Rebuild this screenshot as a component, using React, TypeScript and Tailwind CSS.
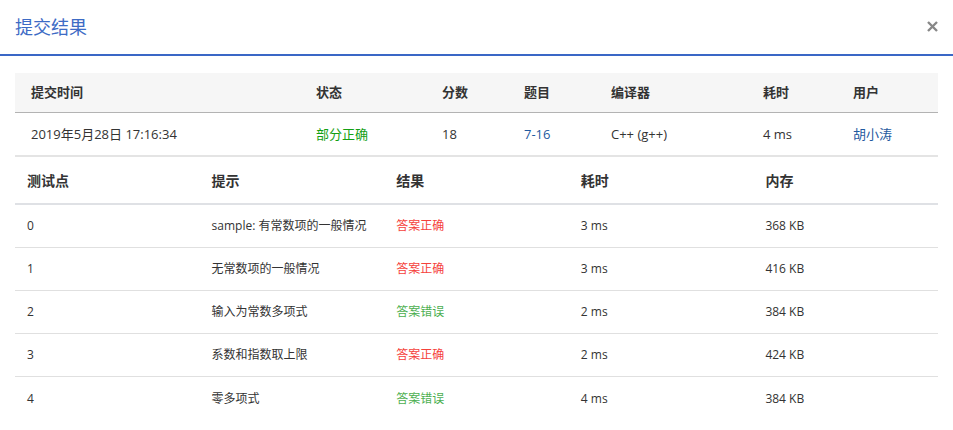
import React from "react";

type Case = { id: string; hint: string; ok: boolean; time: string; mem: string };

const cases: Case[] = [
  { id: "0", hint: "sample: 有常数项的一般情况", ok: true, time: "3 ms", mem: "368 KB" },
  { id: "1", hint: "无常数项的一般情况", ok: true, time: "3 ms", mem: "416 KB" },
  { id: "2", hint: "输入为常数多项式", ok: false, time: "2 ms", mem: "384 KB" },
  { id: "3", hint: "系数和指数取上限", ok: true, time: "2 ms", mem: "424 KB" },
  { id: "4", hint: "零多项式", ok: false, time: "4 ms", mem: "384 KB" },
];

export default function App() {
  return (
    <div
      className="w-[953px] h-[430px] bg-white text-[#333] overflow-hidden"
      style={{ fontFamily: '"Open Sans", "Noto Sans CJK SC", sans-serif' }}
    >
      <div className="h-[56px] flex items-center justify-between pl-[15px] pr-[15px] border-b-2 border-[#3a67c6]">
        <span className="text-[18px] text-[#3d6bc5] leading-none">提交结果</span>
        <svg width="11" height="11" viewBox="0 0 11 11" className="mb-[2px]">
          <path d="M1 1 L10 10 M10 1 L1 10" stroke="#888" strokeWidth="2.4" strokeLinecap="butt" />
        </svg>
      </div>

      <div className="mx-[15px] mt-[17px]">
        <div className="grid grid-cols-[285px_126px_82px_87px_152px_90px_103px] h-[40px] items-center bg-[#f6f6f6] border-b border-[#b3b3b3] text-[13px] font-bold">
          {["提交时间", "状态", "分数", "题目", "编译器", "耗时", "用户"].map((h) => (
            <div key={h} className="pl-[16px]">{h}</div>
          ))}
        </div>
        <div className="grid grid-cols-[285px_126px_82px_87px_152px_90px_103px] h-[44px] items-center border-b-2 border-[#e4e4e4] text-[13px] pt-[2px]">
          <div className="pl-[16px]">2019年5月28日 17:16:34</div>
          <div className="pl-[16px] text-[#14a014]">部分正确</div>
          <div className="pl-[16px]">18</div>
          <div className="pl-[16px] text-[#1f5aa0]">7-16</div>
          <div className="pl-[16px]">C++ (g++)</div>
          <div className="pl-[16px]">4 ms</div>
          <div className="pl-[16px] text-[#1f5aa0]">胡小涛</div>
        </div>

        <div className="grid grid-cols-5 h-[48px] items-center border-b-2 border-[#dfe1e5] text-[14px] font-bold">
          {["测试点", "提示", "结果", "耗时", "内存"].map((h) => (
            <div key={h} className="pl-[12px]">{h}</div>
          ))}
        </div>
        {cases.map((c, i) => (
          <div
            key={c.id}
            className={`grid grid-cols-5 h-[43px] items-center text-[12px] ${i < cases.length - 1 ? "border-b border-[#e0e0e0]" : ""}`}
          >
            <div className="pl-[12px]">{c.id}</div>
            <div className="pl-[12px]">{c.hint}</div>
            <div className={`pl-[12px] ${c.ok ? "text-[#f5413b]" : "text-[#4caf50]"}`}>
              {c.ok ? "答案正确" : "答案错误"}
            </div>
            <div className="pl-[12px]">{c.time}</div>
            <div className="pl-[12px]">{c.mem}</div>
          </div>
        ))}
      </div>
    </div>
  );
}
